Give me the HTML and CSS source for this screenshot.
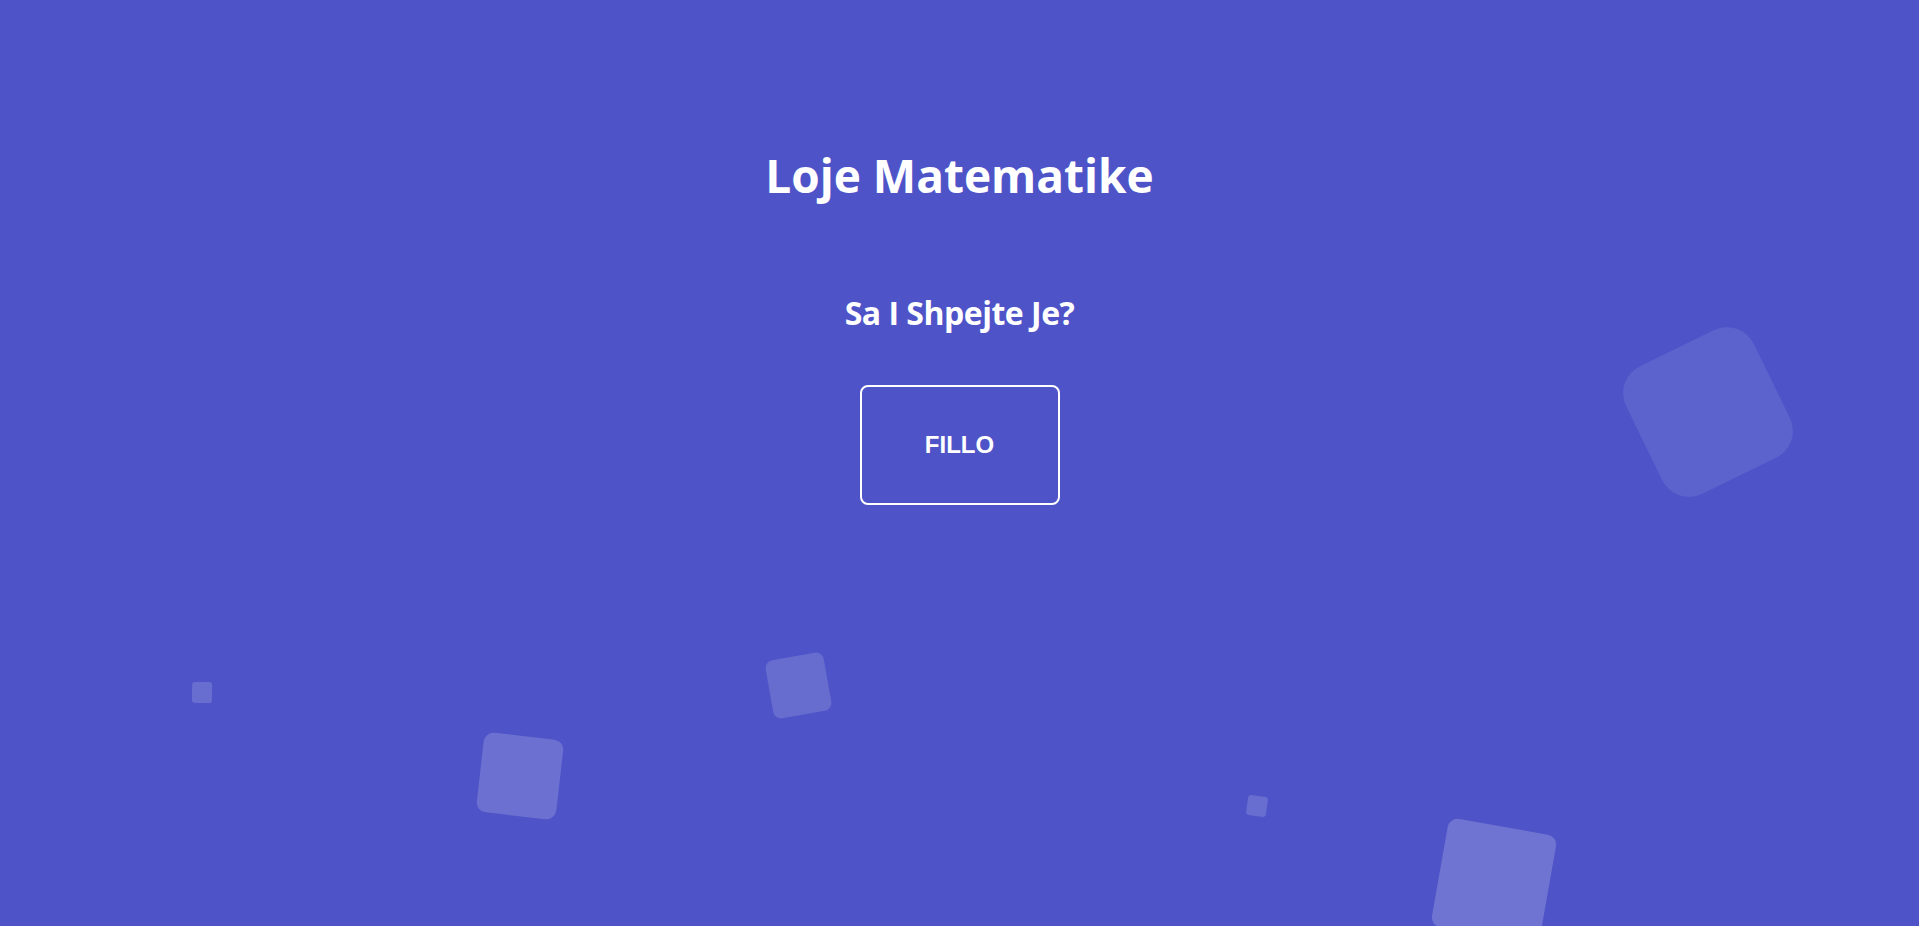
FILE: index.html
```html
<!DOCTYPE html>
<html lang="sq">
<head>
<meta charset="utf-8">
<title>Loje Matematike</title>
<link rel="stylesheet" href="styles.css">
</head>
<body>
<div class="area">
  <ul class="squares" aria-hidden="true">
    <li class="sq sq-1"></li>
    <li class="sq sq-2"></li>
    <li class="sq sq-3"></li>
    <li class="sq sq-4"></li>
    <li class="sq sq-5"></li>
    <li class="sq sq-6"></li>
  </ul>
  <main class="content">
    <h1 class="title">Loje Matematike</h1>
    <h2 class="subtitle">Sa I Shpejte Je?</h2>
    <button class="start-btn" type="button">FILLO</button>
  </main>
</div>
</body>
</html>
```

FILE: styles.css
```css
* {
  box-sizing: border-box;
}

html, body {
  margin: 0;
  padding: 0;
}

body {
  font-family: "Open Sans", "Liberation Sans", sans-serif;
  background: #4e54c8;
}

.area {
  position: relative;
  width: 100%;
  height: 100vh;
  overflow: hidden;
  background: #4e54c8;
}

.squares {
  position: absolute;
  inset: 0;
  margin: 0;
  padding: 0;
  list-style: none;
  pointer-events: none;
}

.sq {
  position: absolute;
  display: block;
}

.sq-1 {
  left: 1637px;
  top: 341px;
  width: 142px;
  height: 142px;
  border-radius: 30px;
  transform: rotate(-26deg);
  background: rgba(255, 255, 255, 0.09);
}

.sq-2 {
  left: 769px;
  top: 656px;
  width: 59px;
  height: 59px;
  border-radius: 8px;
  transform: rotate(-10deg);
  background: rgba(255, 255, 255, 0.14);
}

.sq-3 {
  left: 480px;
  top: 736px;
  width: 80px;
  height: 80px;
  border-radius: 10px;
  transform: rotate(6.5deg);
  background: rgba(255, 255, 255, 0.17);
}

.sq-4 {
  left: 192px;
  top: 682px;
  width: 20px;
  height: 21px;
  border-radius: 3px;
  transform: rotate(1deg);
  background: rgba(255, 255, 255, 0.15);
}

.sq-5 {
  left: 1247px;
  top: 796px;
  width: 20px;
  height: 20px;
  border-radius: 3px;
  transform: rotate(8deg);
  background: rgba(255, 255, 255, 0.15);
}

.sq-6 {
  left: 1439px;
  top: 826px;
  width: 110px;
  height: 110px;
  border-radius: 10px;
  transform: rotate(10deg);
  background: rgba(255, 255, 255, 0.19);
}

.content {
  position: relative;
  display: flex;
  flex-direction: column;
  align-items: center;
  padding-top: 147px;
  color: #ffffff;
}

.title {
  margin: 0;
  font-family: "Open Sans", "Liberation Sans", sans-serif;
  font-weight: 700;
  font-size: 46px;
  line-height: 56px;
  letter-spacing: 0;
  color: #ffffff;
}

.subtitle {
  margin: 90px 0 0;
  font-family: "Open Sans", "Liberation Sans", sans-serif;
  font-weight: 700;
  font-size: 32px;
  line-height: 40px;
  letter-spacing: -0.5px;
  color: #ffffff;
}

.start-btn {
  margin-top: 52px;
  width: 200px;
  height: 120px;
  border: 2px solid #ffffff;
  border-radius: 8px;
  background: transparent;
  color: #ffffff;
  font-family: "Liberation Sans", Arial, sans-serif;
  font-weight: 700;
  font-size: 24px;
  cursor: pointer;
}
```
